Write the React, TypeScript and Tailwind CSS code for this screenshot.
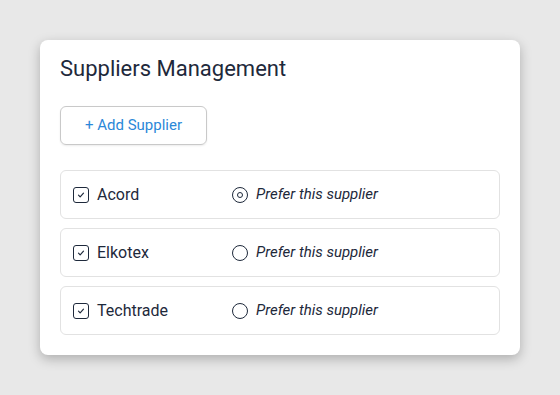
import React, { useState } from 'react';

const suppliers = ['Acord', 'Elkotex', 'Techtrade'];

const CheckIcon = () => (
  <span className="flex h-4 w-4 items-center justify-center rounded-[3px] border-[1.5px] border-[#1e293b]">
    <svg viewBox="0 0 12 12" className="h-2.5 w-2.5" fill="none" stroke="#1e293b" strokeWidth="1.4" strokeLinecap="round" strokeLinejoin="round">
      <path d="M3 6.2l2 2 4-4.4" />
    </svg>
  </span>
);

const Radio = ({ checked }: { checked: boolean }) => (
  <span className="flex h-4 w-4 items-center justify-center rounded-full border-[1.5px] border-[#1e293b]">
    {checked && <span className="h-1.5 w-1.5 rounded-full border-[1.5px] border-[#1e293b]" />}
  </span>
);

export default function App() {
  const [preferred, setPreferred] = useState('Acord');

  return (
    <div className="min-h-[395px] bg-[#e8e8e8] p-10 font-['Roboto',sans-serif] text-[#1e293b]">
      <div className="w-[480px] rounded-lg bg-white px-5 pt-[15px] pb-[20px] shadow-[0_4px_12px_rgba(0,0,0,0.25)]">
        <h1 className="text-[22px] leading-7">Suppliers Management</h1>

        <button className="mt-[23px] h-[39px] rounded-md border border-[#c9c9c9] px-6 text-[15px] text-[#2b88d8] shadow-[0_1px_2px_rgba(0,0,0,0.08)]">
          + Add Supplier
        </button>

        <div className="mt-[25px] flex flex-col gap-[9px]">
          {suppliers.map((name) => (
            <div key={name} className="flex h-[49px] items-center rounded-md border border-[#e2e2e2] pl-3">
              <div className="flex w-[159px] items-center gap-2">
                <CheckIcon />
                <span className="text-base">{name}</span>
              </div>
              <button onClick={() => setPreferred(name)} className="flex items-center gap-2">
                <Radio checked={preferred === name} />
                <span className="text-[15px] italic">Prefer this supplier</span>
              </button>
            </div>
          ))}
        </div>
      </div>
    </div>
  );
}
